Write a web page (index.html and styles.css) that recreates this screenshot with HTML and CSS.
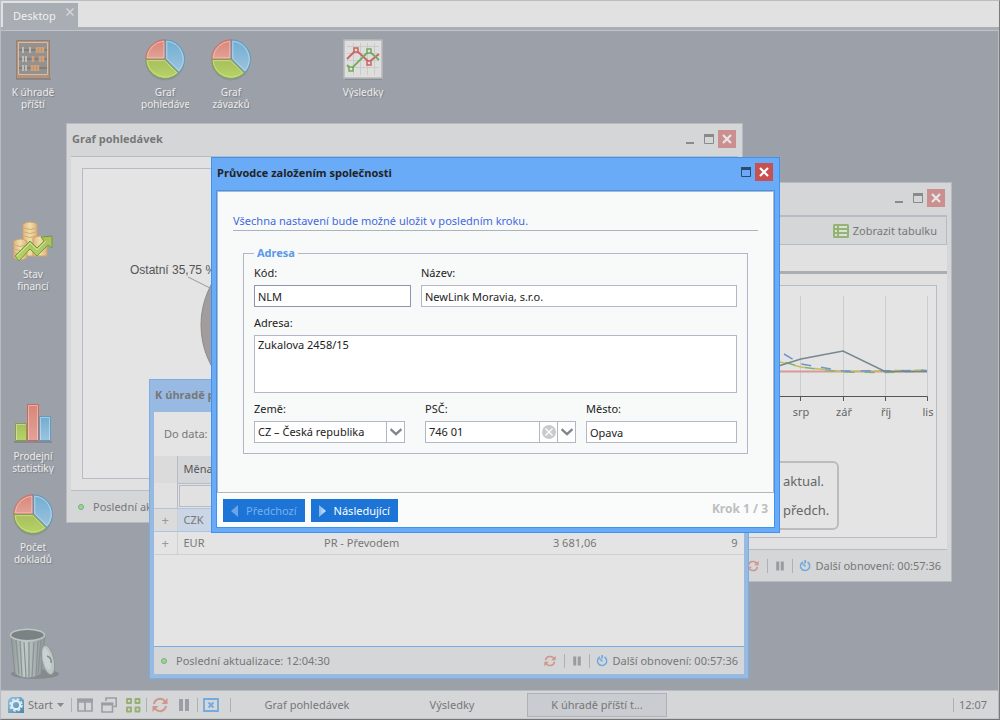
FILE: index.html
```html
<!DOCTYPE html>
<html lang="cs">
<head>
<meta charset="utf-8">
<title>Desktop</title>
<link rel="stylesheet" href="styles.css">
</head>
<body>
<svg class="defs" aria-hidden="true">
  <defs>
    <linearGradient id="gRed" x1="0" y1="0" x2="0" y2="1"><stop offset="0" stop-color="#d98578"/><stop offset="1" stop-color="#e3a297"/></linearGradient>
    <linearGradient id="gBlue" x1="0" y1="0" x2="0" y2="1"><stop offset="0" stop-color="#70add2"/><stop offset="1" stop-color="#9dc4de"/></linearGradient>
    <linearGradient id="gGreen" x1="0" y1="0" x2="0" y2="1"><stop offset="0" stop-color="#a9bd5c"/><stop offset="1" stop-color="#b5d568"/></linearGradient>
    <linearGradient id="gCoin" x1="0" y1="0" x2="1" y2="0"><stop offset="0" stop-color="#dfb780"/><stop offset=".5" stop-color="#f0dfa8"/><stop offset="1" stop-color="#dbb27c"/></linearGradient>
    <linearGradient id="gCan" x1="0" y1="0" x2="1" y2="0"><stop offset="0" stop-color="#8d9796"/><stop offset=".4" stop-color="#c3cdca"/><stop offset="1" stop-color="#8b9695"/></linearGradient>
    <linearGradient id="gLogo" x1="0" y1="0" x2="1" y2="1"><stop offset="0" stop-color="#8fc4e2"/><stop offset="1" stop-color="#4b87ab"/></linearGradient>
    <linearGradient id="gArrow" x1="0" y1="0" x2="1" y2="0"><stop offset="0" stop-color="#7fb3f0"/><stop offset="1" stop-color="#dbe9fb"/></linearGradient>
  </defs>
  <symbol id="pie" viewBox="0 0 40 42">
    <ellipse cx="20" cy="22" rx="19.500" ry="19.500" fill="#7f858b" opacity=".5"/>
    <path d="M20 20V.8A19.200 19.200 0 0 0 .8 20z" fill="url(#gRed)" stroke="#c5685c" stroke-width=".8"/>
    <path d="M20.500 20V.8A19.200 19.200 0 0 1 34 33.500z" fill="url(#gBlue)" stroke="#5793bd" stroke-width=".8"/>
    <path d="M20 20.500H.8A19.200 19.200 0 0 0 33.400 33.900z" fill="url(#gGreen)" stroke="#7f9f45" stroke-width=".8"/>
    <path d="M18.800 18.800V2.200A18 18 0 0 0 2.200 18.800z" fill="none" stroke="#efc1b9" stroke-width=".8"/>
    <path d="M21.800 19.600V2.200A18 18 0 0 1 34 31.600z" fill="none" stroke="#bfdcec" stroke-width=".8"/>
    <path d="M2.200 21.700H19.600L31.700 33.700A18 18 0 0 1 2.200 21.700z" fill="none" stroke="#cfe294" stroke-width=".8"/>
  </symbol>
  <symbol id="refresh" viewBox="0 0 16 16">
    <path d="M2 7A6.200 6.200 0 0 1 13 4.300M14 9A6.200 6.200 0 0 1 3 11.700" fill="none" stroke="currentColor" stroke-width="2"/>
    <path d="M15.500 1V7H9.500zM.5 15V9H6.500z" fill="currentColor"/>
  </symbol>
  <symbol id="pause" viewBox="0 0 16 16"><path d="M3 2h4v12H3zM9 2h4v12H9z" fill="currentColor"/></symbol>
  <symbol id="timer" viewBox="0 0 12 12">
    <path d="M4 1.800A4.600 4.600 0 1 0 8.500 2M3.500 3.500L6.500 6.500" fill="none" stroke="currentColor" stroke-width="1.500"/>
    <path d="M5.300 0H7v3.500H5.300z" fill="currentColor"/>
  </symbol>
  <symbol id="min" viewBox="0 0 10 10"><path d="M1 8h8v2H1z" fill="currentColor"/></symbol>
  <symbol id="max" viewBox="0 0 10 10"><path d="M.5.5h9v9h-9z" fill="none" stroke="currentColor"/><path d="M0 0h10v3H0z" fill="currentColor"/></symbol>
  <symbol id="cross" viewBox="0 0 10 10"><path d="M1 1L9 9M9 1L1 9" stroke="currentColor" stroke-width="2.200"/></symbol>
  <symbol id="chev" viewBox="0 0 12 8"><path d="M.5 1.200L6 6.200L11.500 1.200" fill="none" stroke="#7f868d" stroke-width="2.400"/></symbol>
</svg>

<div class="shell">
  <nav class="tabs">
    <div class="tab"><span>Desktop</span>
      <button class="tab-close" aria-label="Zavřít"><svg width="8" height="8"><path d="M.5.5L7.500 7.500M7.500.5L.5 7.500" stroke="#d3d5d8" stroke-width="1.500"/></svg></button>
    </div>
  </nav>

  <main class="desktop">
    <div class="icons">
      <button class="icon c1 r1">
        <svg width="40" height="42" viewBox="0 0 40 42">
          <path d="M3 39h35v2H3z" fill="#858a90"/>
          <path d="M3.500 1.500h33v38h-33z" fill="#b2937e" stroke="#97806f"/>
          <path d="M5.500 3.500h29v32h-29z" fill="#94918e" stroke="#d2beac"/>
          <path d="M6 11h28M6 20h28M6 29h28" stroke="#6b6c6d"/>
          <path d="M10 8v6M17 8v6M10 17v6M13 17v6M10 26v6M13 26v6" stroke="#bcbdbc" stroke-width="2"/>
          <path d="M24 8v6M27 8v6M30 8v6M20 17v6M27 17v6M30 17v6M19 26v6M22 26v6M25 26v6" stroke="#d0a176" stroke-width="2.600"/>
        </svg>
        <span>K úhradě příští</span>
      </button>
      <button class="icon c3 r1"><svg width="40" height="42"><use href="#pie"/></svg><span>Graf pohledávek</span></button>
      <button class="icon c4 r1"><svg width="40" height="42"><use href="#pie"/></svg><span>Graf závazků</span></button>
      <button class="icon c6 r1">
        <svg width="40" height="42" viewBox="0 0 40 42">
          <path d="M2 38h37v3H2z" fill="#888e94"/>
          <path d="M1 1h38v38H1z" fill="#dededd" stroke="#b7b9ba" stroke-width="1.500"/>
          <path d="M4 7.500h32M4 14.500h32M4 21.500h32M4 28.500h32M10.500 4v32M17.500 4v32M24.500 4v32M31.500 4v32" stroke="#c8cacb"/>
          <path d="M4 20L13 11L26 23L36 15" fill="none" stroke="#cc6360" stroke-width="1.800"/>
          <path d="M4 26L8 30L26 12L36 21" fill="none" stroke="#77a85f" stroke-width="1.800"/>
          <path d="M11 9h4v4h-4zM24 22h4v4h-4z" fill="#e4dada" stroke="#cc6360" stroke-width="1.500"/>
          <path d="M6 28h4v4H6zM24 10h4v4h-4z" fill="#dde4da" stroke="#77a85f" stroke-width="1.500"/>
        </svg>
        <span>Výsledky</span>
      </button>
      <button class="icon c1 r3">
        <svg width="40" height="42" viewBox="0 0 40 42">
          <path d="M10 3q7-4 14 0v32H10z" fill="url(#gCoin)" stroke="#cda173"/>
          <path d="M20 17q7-4 14 0v18H20z" fill="url(#gCoin)" stroke="#cda173"/>
          <path d="M.8 20q7-4 13 0v17q-7 4-13 0z" fill="url(#gCoin)" stroke="#cda173"/>
          <path d="M11 7q6 3 12 0M11 11q6 3 12 0M11 15q6 3 12 0M1 24q6 3 12 0M1 28q6 3 12 0M1 32q6 3 12 0" fill="none" stroke="#d4ab78"/>
          <path d="M2 35L17 20L24 27L31 20L28 16L39 15V27L35 24L24 35L17 28L6 40z" fill="url(#gGreen)" stroke="#6f9c3c"/>
          <path d="M4 35L17 22L24 29L33 20" fill="none" stroke="#d2e59a"/>
        </svg>
        <span>Stav financí</span>
      </button>
      <button class="icon c1 r5">
        <svg width="40" height="42" viewBox="0 0 40 42">
          <path d="M1 38h38v2H1z" fill="#858a90"/>
          <path d="M2.500 20.500h11v17h-11z" fill="url(#gGreen)" stroke="#86a049"/>
          <path d="M26.500 13.500h11v24h-11z" fill="url(#gBlue)" stroke="#5f9cc4"/>
          <path d="M14.500 1.500h11v36h-11z" fill="url(#gRed)" stroke="#c46b60"/>
          <path d="M15.500 37V2.500h9V37M27.500 37V14.500h9V37M3.500 37V21.500h9" fill="none" stroke="#fff" opacity=".35"/>
        </svg>
        <span>Prodejní statistiky</span>
      </button>
      <button class="icon c1 r6"><svg width="40" height="42"><use href="#pie"/></svg><span>Počet dokladů</span></button>
    </div>
    <button class="trash" aria-label="Koš">
      <svg width="50" height="52" viewBox="0 0 50 52">
        <ellipse cx="26" cy="46" rx="24" ry="5" fill="#868a8f"/>
        <path d="M2 7L6 46Q19 54 32 46L36 7z" fill="url(#gCan)" stroke="#858f8e"/>
        <path d="M7 12L10 46M11 13L13 48M15 14L17 49M20 14V49M25 14L23 49M29 13L27 48M32 12L29 46" stroke="#8a9493" stroke-width="1.300"/>
        <ellipse cx="18.500" cy="7" rx="17" ry="5.800" fill="#7b8283" stroke="#bdc6c4" stroke-width="1.600"/>
        <ellipse cx="39" cy="32" rx="6" ry="15" transform="rotate(-12 39 32)" fill="#bcc6c4" stroke="#8d9897"/>
        <ellipse cx="38" cy="31" rx="3.500" ry="11" transform="rotate(-12 38 31)" fill="#cad3d1"/>
        <path d="M38 28q5 2 4 7" fill="none" stroke="#848f8f" stroke-width="1.500"/>
      </svg>
    </button>

    <section class="win win-graf">
      <header class="bar"><h2>Graf pohledávek</h2>
        <button aria-label="Minimalizovat"><svg width="10" height="10"><use href="#min"/></svg></button>
        <button aria-label="Maximalizovat"><svg width="10" height="10"><use href="#max"/></svg></button>
        <button class="close" aria-label="Zavřít"><svg width="10" height="10"><use href="#cross"/></svg></button>
      </header>
      <div class="body">
        <div class="panel">
          <svg class="pie-chart" width="300" height="300" viewBox="0 0 300 300">
            <circle cx="203" cy="156" r="85" fill="#a29d9c" stroke="#8a8a8a"/>
            <path d="M105 108L127 119" stroke="#999"/>
            <text x="47" y="105">Ostatní 35,75 %</text>
          </svg>
        </div>
      </div>
      <footer class="status"><i class="dot"></i><span>Poslední aktualizace: 12:04:30</span></footer>
    </section>

    <section class="win win-res">
      <header class="bar"><h2>Výsledky</h2>
        <button aria-label="Minimalizovat"><svg width="10" height="10"><use href="#min"/></svg></button>
        <button aria-label="Maximalizovat"><svg width="10" height="10"><use href="#max"/></svg></button>
        <button class="close" aria-label="Zavřít"><svg width="10" height="10"><use href="#cross"/></svg></button>
      </header>
      <div class="toolbar">
        <button class="tool"><svg width="16" height="14" viewBox="0 0 16 14"><rect width="16" height="14" rx="1.500" fill="#94b374"/><path d="M2 3h2M6 3h8M2 7h2M6 7h8M2 11h2M6 11h8" stroke="#dbe0d6" stroke-width="2"/></svg><span>Zobrazit tabulku</span></button>
      </div>
      <div class="body">
        <div class="panel">
          <svg class="line-chart" width="240" height="250" viewBox="0 0 240 250">
            <path d="M104.500 10v100M147.500 10v100M189.500 10v100M231.500 10v100" stroke="#cdcdce"/>
            <path d="M40 85.500H231" stroke="#d69a9a" stroke-width="2"/>
            <path d="M60 70L84 76L105 81L147 85.500L231 84" fill="none" stroke="#c5bd5f" stroke-width="1.500" stroke-dasharray="10 10"/>
            <path d="M70 72L84 75L105 81L147 86L189 86.500L231 85" fill="none" stroke="#80b56c" stroke-width="1.500" stroke-dasharray="10 10"/>
            <path d="M88 68L105 78L147 85L231 84.500" fill="none" stroke="#6f95cc" stroke-width="1.500" stroke-dasharray="10 10"/>
            <path d="M60 87L84 79.500L105 73L147 65L189 85.500H231" fill="none" stroke="#75878f" stroke-width="1.500"/>
            <path d="M40 110.500H231.500V115M104.500 110v5M147.500 110v5M189.500 110v5" fill="none" stroke="#555"/>
            <text x="105" y="130">srp</text><text x="148" y="130">zář</text><text x="190" y="130">říj</text><text x="232" y="130">lis</text>
          </svg>
          <div class="legend"><span>aktual.</span><span>předch.</span></div>
        </div>
      </div>
      <footer class="status"><i class="dot"></i><span>Poslední aktualizace: 12:04:30</span>
        <div class="right"><svg class="red" width="12" height="12"><use href="#refresh"/></svg><i class="sep"></i><svg width="12" height="12"><use href="#pause"/></svg><i class="sep"></i><svg class="blue" width="12" height="12"><use href="#timer"/></svg><span>Další obnovení: 00:57:36</span></div>
      </footer>
    </section>

    <section class="win win-pay">
      <header class="bar"><h2>K úhradě příští týden</h2></header>
      <div class="body">
        <p class="filter">Do data:</p>
        <table>
          <colgroup><col class="w-exp"><col class="w-cur"><col><col class="w-sum"><col class="w-cnt"></colgroup>
          <thead>
            <tr><th></th><th>Měna</th><th></th><th></th><th></th></tr>
            <tr class="search"><th></th><th><input aria-label="Filtr měny"></th><th></th><th></th><th></th></tr>
          </thead>
          <tbody>
            <tr class="selected"><td class="exp">+</td><td>CZK</td><td></td><td></td><td></td></tr>
            <tr><td class="exp">+</td><td>EUR</td><td>PR - Převodem</td><td class="num">3 681,06</td><td class="num">9</td></tr>
          </tbody>
        </table>
      </div>
      <footer class="status"><i class="dot"></i><span>Poslední aktualizace: 12:04:30</span>
        <div class="right"><svg class="red" width="12" height="12"><use href="#refresh"/></svg><i class="sep"></i><svg width="12" height="12"><use href="#pause"/></svg><i class="sep"></i><svg class="blue" width="12" height="12"><use href="#timer"/></svg><span>Další obnovení: 00:57:36</span></div>
      </footer>
    </section>

    <form class="dialog" role="dialog" aria-labelledby="dlg-title">
      <header class="bar"><h2 id="dlg-title">Průvodce založením společnosti</h2>
        <button type="button" aria-label="Maximalizovat"><svg width="10" height="10"><use href="#max"/></svg></button>
        <button type="button" class="close" aria-label="Zavřít"><svg width="10" height="10"><use href="#cross"/></svg></button>
      </header>
      <div class="sheet">
        <div class="page">
          <p class="intro">Všechna nastavení bude možné uložit v posledním kroku.</p>
          <fieldset>
            <legend>Adresa</legend>
            <div class="row">
              <div class="field code"><label for="kod">Kód:</label><input id="kod" class="box focus" value="NLM"></div>
              <div class="field grow"><label for="nazev">Název:</label><input id="nazev" class="box" value="NewLink Moravia, s.r.o."></div>
            </div>
            <div class="row">
              <div class="field grow"><label for="adresa">Adresa:</label><textarea id="adresa" class="box">Zukalova 2458/15</textarea></div>
            </div>
            <div class="row">
              <div class="field grow country"><label for="zeme">Země:</label>
                <div class="box combo"><select id="zeme"><option>CZ – Česká republika</option></select><span class="part"><svg width="12" height="8"><use href="#chev"/></svg></span></div>
              </div>
              <div class="field grow"><label for="psc">PSČ:</label>
                <div class="box combo"><input id="psc" value="746 01"><button type="button" class="part" aria-label="Vymazat"><svg width="14" height="14"><circle cx="7" cy="7" r="7" fill="#c9cacb"/><path d="M3.500 3.500L10.500 10.500M10.500 3.500L3.500 10.500" stroke="#fff" stroke-width="1.300"/></svg></button><button type="button" class="part" aria-label="Vybrat"><svg width="12" height="8"><use href="#chev"/></svg></button></div>
              </div>
              <div class="field grow"><label for="mesto">Město:</label><input id="mesto" class="box" value="Opava"></div>
            </div>
          </fieldset>
        </div>
        <footer class="actions">
          <button type="button" disabled><svg width="7" height="12"><path d="M7 0V12L0 6z" fill="#6ca4e8"/></svg><span>Předchozí</span></button>
          <button type="button"><svg width="7" height="12"><path d="M0 0V12L7 6z" fill="url(#gArrow)"/></svg><span>Následující</span></button>
          <strong>Krok 1 / 3</strong>
        </footer>
      </div>
    </form>
  </main>

  <footer class="taskbar">
    <button class="start"><svg width="16" height="16" viewBox="0 0 16 16"><path d="M3 0H13L16 3V16H0V3z" fill="url(#gLogo)"/><circle cx="8" cy="8" r="4.200" fill="none" stroke="#e6edf1" stroke-width="2.200"/><circle cx="8" cy="8" r="6" fill="none" stroke="#e6edf1" stroke-width="1.500" stroke-dasharray="2.700 2"/></svg><span>Start</span><svg width="7" height="4"><path d="M0 0H7L3.500 4z" fill="#85888c"/></svg></button>
    <i class="sep"></i>
    <div class="group">
      <button aria-label="Vedle sebe"><svg width="16" height="16" viewBox="0 0 16 16"><path d="M1 2.500h14v11.500H1zM1 5h14M8 4v10" fill="none" stroke="#9b9ea5" stroke-width="1.700"/><path d="M.2 1.500h15.600v3H.2z" fill="#9b9ea5"/></svg></button>
      <button aria-label="Kaskáda"><svg width="16" height="16" viewBox="0 0 16 16"><path d="M1 6.500h10.500V15H1zM5 4V1h10.200v8.500H12.500" fill="none" stroke="#9b9ea5" stroke-width="1.600"/><path d="M.2 5.500h12v3H.2z" fill="#9b9ea5"/></svg></button>
      <button aria-label="Dlaždice"><svg width="16" height="16" viewBox="0 0 16 16"><path d="M2 2h4v4H2zM10.500 2h4v4h-4zM2 10.500h4v4H2zM10.500 10.500h4v4h-4z" fill="none" stroke="#93af72" stroke-width="1.800" stroke-linejoin="round"/></svg></button>
    </div>
    <i class="sep"></i>
    <div class="group">
      <button class="red" aria-label="Obnovit"><svg width="16" height="16"><use href="#refresh"/></svg></button>
      <button class="grey" aria-label="Pozastavit"><svg width="16" height="16"><use href="#pause"/></svg></button>
    </div>
    <i class="sep"></i>
    <button aria-label="Zavřít vše"><svg width="16" height="16" viewBox="0 0 16 16"><path d="M1 2h14v12H1z" fill="none" stroke="#72aae2" stroke-width="1.800"/><path d="M5.500 5.500L10.500 10.500M10.500 5.500L5.500 10.500" stroke="#72aae2" stroke-width="1.800"/></svg></button>
    <i class="sep far"></i>
    <div class="tasks"><button>Graf pohledávek</button><button>Výsledky</button><button class="on">K úhradě příští t...</button></div>
    <i class="sep"></i>
    <time>12:07</time>
  </footer>
</div>
</body>
</html>
```

FILE: styles.css
```css
* { box-sizing: border-box; }
body { margin: 0; font: 11px/16px "Noto Sans", sans-serif; color: #777; }
button, input, select, textarea { font: inherit; color: inherit; margin: 0; padding: 0; border: 0; background: none; border-radius: 0; outline: 0; }
svg { display: block; flex: none; }
h2, p { margin: 0; font-size: inherit; }
.defs { position: absolute; width: 0; height: 0; }

.shell { display: flex; flex-direction: column; height: 100vh; border: 1px solid #b9bdc3; border-right-color: #7a7a7a; border-bottom-color: #747474; background: #9ca0a8; }
.tabs { display: flex; padding: 2px 2px 0; background: #e1e1e1; border-bottom: 3px solid #a9adb4; }
.tab { display: flex; justify-content: space-between; width: 75px; padding: 5px 4px 3px 10px; background: #a9adb4; color: #f0f0f0; }
.tab-close { align-self: flex-start; }
.desktop { position: relative; flex: 1; overflow: hidden; border-top: 1px solid #c0c3ca; border-right: 1px solid #b9bdc3; }

.icons { display: grid; grid-template-columns: repeat(6, 66px); grid-template-rows: repeat(6, 91px); padding-top: 8px; margin-left: -1px; }
.icon { display: flex; flex-direction: column; align-items: center; align-self: start; justify-self: center; gap: 5px; width: 48px; overflow: hidden; font-size: 10px; line-height: 12px; color: #ececec; text-shadow: 1px 1px 1px #7b7f86; }
.icon span { width: 100%; }
.c1 { grid-column: 1; } .c3 { grid-column: 3; } .c4 { grid-column: 4; } .c6 { grid-column: 6; }
.r1 { grid-row: 1; } .r3 { grid-row: 3; } .r5 { grid-row: 5; } .r6 { grid-row: 6; }
.trash { position: absolute; left: 8px; bottom: 10px; }

.win { position: absolute; display: flex; flex-direction: column; padding: 0 4px; border: 1px solid #b7bbc1; background: #d5d6d7; }
.win-graf { left: 65px; top: 92px; width: 677px; height: 400px; }
.win-res { left: 299px; top: 151px; width: 652px; height: 400px; }
.win-pay { left: 148px; top: 348px; width: 600px; height: 300px; padding-bottom: 4px; background: #98bae2; border-color: #7aade0; }
.bar { display: flex; align-items: center; gap: 9px; height: 32px; padding: 0 2px 3px 1px; }
.bar h2 { flex: 1; font-family: "Open Sans", "Noto Sans", sans-serif; font-weight: bold; }
.bar button { color: #8a8a8a; }
.bar .close { display: grid; place-items: center; width: 18px; height: 18px; margin-left: -5px; background: #ca8f8e; color: #e6e6e6; }
.body { flex: 1; background: #e1e1e1; border-top: 1px solid #b7bbc1; min-height: 0; }
.win-graf .body, .win-res .body { padding: 11px; display: flex; }
.panel { flex: 1; position: relative; border: 1px solid #b7bbc6; background: #e4e4e4; }
.pie-chart { font: 12px "Liberation Sans", sans-serif; fill: #555; }
.status { display: flex; align-items: center; gap: 9px; height: 32px; padding: 0 6px 0 7px; border-top: 1px solid #b4bcc8; background: #d5d6d7; }
.dot { width: 6px; height: 6px; border-radius: 50%; background: #a5cf9f; border: 1px solid #6fb472; }
.right { display: flex; align-items: center; gap: 6px; margin-left: auto; color: #999b9f; }
.right span { color: #777; margin-left: -2px; }
.red, .right .red { color: #d1958a; }
.right .red { margin-right: 2px; }
.blue { color: #6fa9e0; }
.grey { color: #9b9ea5; }
.sep { width: 1px; height: 14px; background: #aeb0b4; }

.toolbar { display: flex; justify-content: flex-end; height: 30px; padding: 0 9px; border: 1px solid #b7bbc6; border-top-width: 2px; }
.tool { display: flex; align-items: center; gap: 4px; }
.win-res .body { border-top: 0; padding: 40px 10px 11px; background: linear-gradient(#e1e1e1 26px, #a9adb4 26px, #a9adb4 29px, #e1e1e1 29px); }
.line-chart { position: absolute; right: 0; top: 0; fill: #666; text-anchor: middle; }
.legend { position: absolute; right: 97px; bottom: 7px; display: flex; flex-direction: column; gap: 9px; width: 200px; padding: 8px 8px 8px 142px; border: 2px solid #bcbcbc; border-radius: 6px; font-size: 13px; line-height: 20px; color: #666; }

.filter { padding: 14px 10px; }
.win-pay .body { border: 0; background: #e4e4e4; }
.win-pay .status { border-color: #79ade0; height: 28px; }
table { width: 100%; border-collapse: collapse; table-layout: fixed; }
.w-exp { width: 23px; } .w-cur { width: 141px; } .w-sum { width: 141px; } .w-cnt { width: 141px; }
th { height: 27px; padding: 0 6px; text-align: left; font-weight: normal; color: #555; background: #d5d6d9; border: 1px solid #b7bbc6; border-left: 0; border-top: 0; }
th:first-child { background: #dadbda; border-bottom: 0; }
.search th { height: 25px; padding: 1px; background: #e1e1e1; border-bottom: 1px solid #b4c4dc; }
.search input { display: block; width: 100%; height: 22px; border: 1px solid #b7bbc6; }
td { height: 23px; padding: 0 6px; border-bottom: 1px solid #cfcfcf; }
.exp { padding: 0; text-align: center; font-size: 13px; color: #999; border-right: 1px solid #cfcfcf; }
.selected td { background: #cad6e6; border-bottom-color: #a8c4e6; }
.selected .exp { background: #dadbda; }
.num { text-align: right; }

.dialog { position: absolute; left: 210px; top: 126px; width: 569px; padding: 0 4px 4px; border: 1px solid #3d92f2; background: #6aabf7; color: #222; }
.dialog .bar button { color: #2d4a70; }
.dialog .bar { align-items: flex-start; padding-top: 5px; }
.dialog .bar h2 { line-height: 20px; }
.dialog .bar > button { margin-top: 4px; }
.dialog .bar > .close { margin-top: 0; background: #c75050; color: #fff; }
.sheet { border: 1px solid #3d92f2; background: #fafbfb; }
.page { padding: 20px 15px 38px; border: 1px solid #b0b8bf; background: #f8faf9; }
.intro { padding: 0 0 1px; line-height: 17px; color: #4169e1; border-bottom: 1px solid #a9b5bd; }
fieldset { margin: 13px 10px 0; padding: 2px 10px 10px; border: 1px solid #b5b5c8; min-width: 0; }
legend { padding: 0 3px; font-weight: bold; line-height: 18px; color: #5c97ea; }
.row { display: flex; gap: 10px; margin-bottom: 7px; }
.row:last-child { margin-bottom: 0; }
.field { display: flex; flex-direction: column; gap: 4px; min-width: 0; }
.field label { line-height: 17px; }
.grow { flex: 1; }
.code { flex: 0 0 157px; }
.country { margin-right: 10px; }
.box { width: 100%; height: 22px; padding: 0 3px; border: 1px solid #b5b5c8; background: #fff; }
.focus { border-color: #9191b0; }
textarea.box { height: 58px; padding: 1px 3px; resize: none; }
.combo { display: flex; padding: 0; }
.combo input, .combo select { flex: 1; width: 0; min-width: 0; padding-left: 3px; appearance: none; }
.part { display: grid; place-items: center; width: 18px; border-left: 1px solid #b5b5c8; }
.actions { display: flex; gap: 6px; padding: 6px 6px 5px; }
.actions button { display: flex; align-items: center; gap: 8px; height: 23px; padding: 0 8px; background: #1b74d6; color: #fff; }
.actions button:disabled { color: #79b0ee; }
.actions strong { margin-left: auto; font-size: 12px; line-height: 20px; color: #bcbfc1; }

.taskbar { display: flex; align-items: center; gap: 5px; height: 29px; padding: 1px 11px 0 7px; border-top: 1px solid #b7bbc3; border-bottom: 1px solid #c6c8cb; border-right: 1px solid #b9bdc3; background: #d5d6d7; }
.start { display: flex; align-items: center; gap: 4px; width: 58px; }
.group { display: flex; gap: 8px; }
.far { margin-left: 6px; }
.tasks { display: flex; flex: 1; gap: 5px; margin-left: 1px; }
.tasks button { width: 140px; height: 24px; }
.tasks .on { background: #c9ccd0; border: 1px solid #aeb2b6; }
```
